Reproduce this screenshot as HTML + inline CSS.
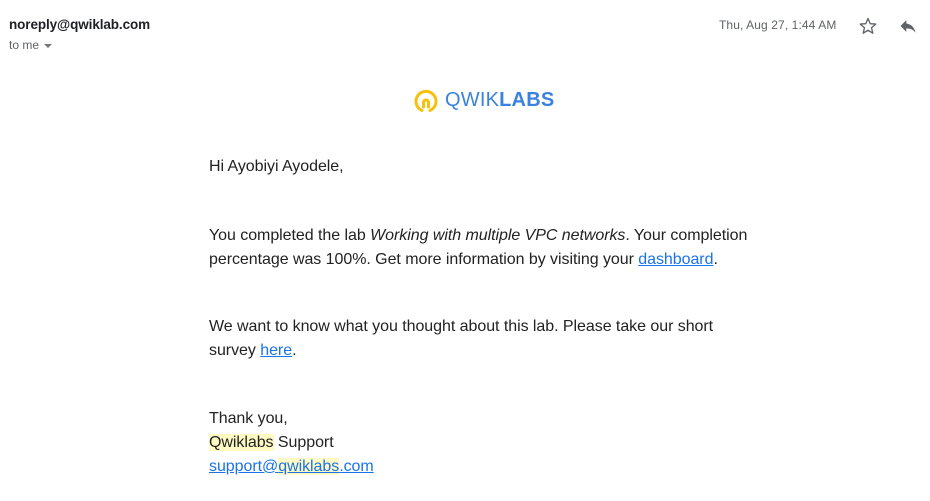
<!DOCTYPE html>
<html><head><meta charset="utf-8"><style>
body{margin:0;width:930px;height:501px;background:#fff;font-family:"Liberation Sans",Arial,sans-serif;position:relative;overflow:hidden;color:#222}
.abs{position:absolute;white-space:nowrap}
.from{left:9px;top:17px;font-size:13.5px;font-weight:bold;color:#202124;letter-spacing:-0.1px}
.to{left:9px;top:38px;font-size:12px;color:#5f6368}
.date{left:719px;top:18px;font-size:12px;color:#5f6368;letter-spacing:0.1px}
.body{left:209px;font-size:16px;color:#222;line-height:24px;letter-spacing:-0.05px}
a{color:#1a73e8;text-decoration:underline}
.hl{background:#fff9c4}
</style></head><body>
<div class="abs from">noreply@qwiklab.com</div>
<div class="abs to">to me <span style="display:inline-block;border:4px solid transparent;border-top:4px solid #777;vertical-align:middle;margin-top:4px;margin-left:2px"></span></div>
<div class="abs date">Thu, Aug 27, 1:44 AM</div>
<svg class="abs" style="left:858px;top:16px" width="20" height="20" viewBox="0 0 24 24"><path d="M12 3l2.6 6.2 6.7.5-5.1 4.4 1.6 6.5L12 17.1 6.2 20.6l1.6-6.5L2.7 9.7l6.7-.5z" fill="none" stroke="#5f6368" stroke-width="1.6" stroke-linejoin="round"/></svg>
<svg class="abs" style="left:897px;top:16px" width="22" height="20" viewBox="0 0 24 24"><path d="M10 9V5l-7 7 7 7v-4.1c5 0 8.5 1.6 11 5.1-1-5-4-10-11-11z" fill="#5f6368"/></svg>
<svg class="abs" style="left:413px;top:88px" width="26" height="26" viewBox="0 0 26 26"><path d="M9 22.5A10 10 0 1 1 17 22.5" fill="none" stroke="#f4c20d" stroke-width="3" stroke-linecap="round"/><path d="M10.5 19v-4.5a2.5 2.5 0 0 1 5 0v4.5" fill="none" stroke="#f4c20d" stroke-width="3" stroke-linecap="round"/></svg>
<div class="abs" style="left:445px;top:89px;font-size:20px;color:#3b82e0;letter-spacing:0.2px"><span style="font-weight:300">QWIK</span><b>LABS</b></div>
<div class="abs body" style="top:155px">Hi Ayobiyi Ayodele,</div>
<div class="abs body" style="top:224px">You completed the lab <i>Working with multiple VPC networks</i>. Your completion<br>percentage was 100%. Get more information by visiting your <a>dashboard</a>.</div>
<div class="abs body" style="top:315px">We want to know what you thought about this lab. Please take our short<br>survey <a>here</a>.</div>
<div class="abs body" style="top:407px">Thank you,<br><span class="hl">Qwiklabs</span> Support<br><a>support@<span class="hl">qwiklabs</span>.com</a></div>
</body></html>
